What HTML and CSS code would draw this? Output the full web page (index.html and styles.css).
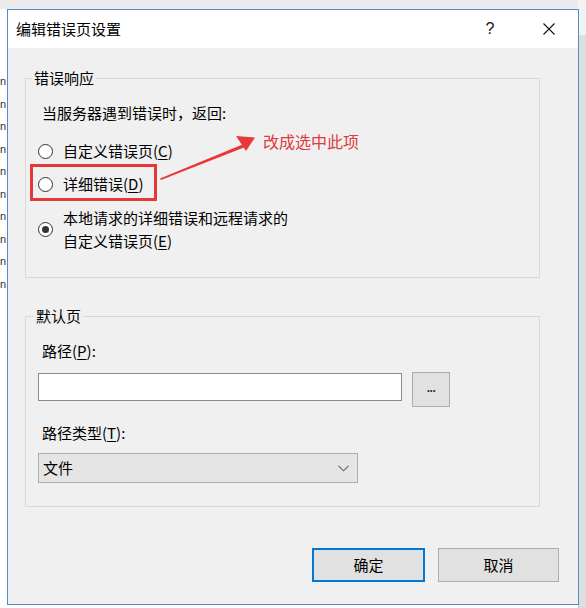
FILE: index.html
```html
<!DOCTYPE html>
<html lang="zh-CN">
<head>
<meta charset="utf-8">
<title>编辑错误页设置</title>
<link rel="stylesheet" href="styles.css">
</head>
<body>
<div class="desk-top"></div>
<div class="desk-right"><div class="desk-right-bar"></div></div>
<div class="desk-left">
  <span>n</span><span>n</span><span>n</span><span>n</span><span>n</span><span>n</span><span>n</span><span>n</span><span>n</span><span>n</span>
</div>

<div class="dialog">
  <div class="titlebar">
    <span class="title">编辑错误页设置</span>
    <span class="help">?</span>
    <span class="close">
      <svg width="12" height="12" viewBox="0 0 12 12"><path d="M0.5 0.5 L11.5 11.5 M11.5 0.5 L0.5 11.5" stroke="#111" stroke-width="1.1" fill="none"/></svg>
    </span>
  </div>
  <div class="content">
    <fieldset class="group group-1">
      <legend>错误响应</legend>
      <div class="label">当服务器遇到错误时，返回:</div>
      <div class="radio radio-1"><span class="circle"></span><span class="rtext">自定义错误页(<u>C</u>)</span></div>
      <div class="radio radio-2"><span class="circle"></span><span class="rtext">详细错误(<u>D</u>)</span></div>
      <div class="radio radio-3"><span class="circle checked"></span><span class="rtext multi">本地请求的详细错误和远程请求的<br>自定义错误页(<u>E</u>)</span></div>
    </fieldset>

    <fieldset class="group group-2">
      <legend>默认页</legend>
      <div class="label">路径(<u>P</u>):</div>
      <div class="path-row">
        <div class="input"></div>
        <div class="browse">...</div>
      </div>
      <div class="label label-type">路径类型(<u>T</u>):</div>
      <div class="select">
        <span>文件</span>
        <svg width="11" height="7" viewBox="0 0 11 7"><path d="M0.5 0.8 L5.5 5.8 L10.5 0.8" stroke="#666" stroke-width="1.1" fill="none"/></svg>
      </div>
    </fieldset>

    <div class="buttons">
      <div class="btn btn-default">确定</div>
      <div class="btn btn-cancel">取消</div>
    </div>
  </div>
</div>

<div class="mark-box"></div>
<svg class="mark-arrow" width="586" height="608" viewBox="0 0 586 608">
  <polygon points="160,178.5 242.5,144.5 244,147.5 161,180" fill="#e8393a"/>
  <polygon points="255,137.5 236,136 246,151" fill="#e8393a"/>
</svg>
<div class="mark-text">改成选中此项</div>
</body>
</html>
```

FILE: styles.css
```css
html, body {
  margin: 0;
  padding: 0;
}
body {
  width: 586px;
  height: 608px;
  background: #ffffff;
  position: relative;
  overflow: hidden;
  font-family: "Noto Sans CJK SC", "Microsoft YaHei", sans-serif;
  font-size: 15px;
  color: #000;
}
u { text-decoration: underline; text-underline-offset: 2px; }

.desk-top {
  position: absolute;
  left: 0; top: 0;
  width: 586px; height: 9px;
  background: #ebebeb;
}
.desk-right {
  position: absolute;
  left: 578px; top: 0;
  width: 8px; height: 608px;
  background: #f3f3f3;
}
.desk-right-bar {
  margin-top: 35px;
  height: 573px;
  background: #dedede;
  border-left: 1px solid #c8c8c8;
}
.desk-left {
  position: absolute;
  left: 0; top: 70px;
  width: 7px;
  display: flex;
  flex-direction: column;
  font-family: "Liberation Sans", sans-serif;
  font-size: 11px;
  line-height: 22.5px;
  color: #333;
}

.dialog {
  position: absolute;
  left: 7px; top: 9px;
  width: 572px; height: 596px;
  box-sizing: border-box;
  border: 1px solid #4d8fcc;
  background: #f0f0f0;
  display: flex;
  flex-direction: column;
}
.titlebar {
  height: 38px;
  background: #fff;
  display: flex;
  align-items: center;
  padding-left: 8px;
}
.title {
  flex: 1;
  font-size: 15px;
  line-height: 20px;
}
.help {
  font-family: "Liberation Sans", sans-serif;
  font-size: 16px;
  color: #111;
  width: 20px;
  text-align: center;
  margin-right: 43px;
}
.close {
  display: flex;
  margin-right: 23px;
}

.content {
  flex: 1;
  padding: 20px 0 0 17px;
  display: flex;
  flex-direction: column;
}
.group {
  margin: 0;
  width: 515px;
  box-sizing: border-box;
  border: 1px solid #d9d9d9;
  padding: 15px 12px 25px 6px;
  min-inline-size: 0;
}
.group legend {
  padding: 0 2px;
  line-height: 20px;
  font-size: 15px;
}
.group-2 legend {
  margin-left: 2px;
}
.label {
  line-height: 20px;
  margin-left: 10px;
}

.radio {
  display: flex;
  align-items: center;
  margin-left: 6px;
  gap: 10px;
}
.radio-1 { margin-top: 18px; }
.radio-2 { margin-top: 13px; }
.radio-3 { margin-top: 12px; }
.rtext { line-height: 20px; }
.rtext.multi { line-height: 23px; }
.circle {
  width: 15px; height: 15px;
  box-sizing: border-box;
  border: 1px solid #333;
  border-radius: 50%;
  background: #fff;
  display: flex;
  align-items: center;
  justify-content: center;
  flex: none;
}
.circle.checked::after {
  content: "";
  width: 7px; height: 7px;
  border-radius: 50%;
  background: #333;
}

.group-2 {
  margin-top: 28px;
  padding-bottom: 23px;
}
.path-row {
  display: flex;
  align-items: flex-start;
  margin-top: 11px;
  margin-left: 6px;
}
.input {
  width: 364px; height: 28px;
  box-sizing: border-box;
  margin-top: 1px;
  background: #fff;
  border: 1px solid #8c8c8c;
}
.browse {
  width: 38px; height: 35px;
  box-sizing: border-box;
  margin-left: 10px;
  background: #e1e1e1;
  border: 1px solid #adadad;
  display: flex;
  align-items: center;
  justify-content: center;
  font-family: "Liberation Sans", sans-serif;
  font-size: 12px;
  font-weight: bold;
  letter-spacing: -0.5px;
  color: #333;
  padding-bottom: 4px;
}
.label-type { margin-top: 16px; }
.select {
  margin-top: 10px;
  margin-left: 6px;
  width: 320px; height: 30px;
  box-sizing: border-box;
  background: #e5e5e5;
  border: 1px solid #adadad;
  display: flex;
  align-items: center;
  justify-content: space-between;
  padding: 0 8px 0 4px;
  line-height: 20px;
}

.buttons {
  margin-top: 41px;
  display: flex;
  justify-content: flex-end;
  padding-right: 19px;
  gap: 13px;
}
.btn {
  height: 34px;
  box-sizing: border-box;
  background: #e1e1e1;
  border: 1px solid #adadad;
  display: flex;
  align-items: center;
  justify-content: center;
  line-height: 20px;
}
.btn-default {
  width: 113px;
  border: 2px solid #0078d7;
}
.btn-cancel {
  width: 121px;
}

.mark-box {
  position: absolute;
  left: 30px; top: 164px;
  width: 127px; height: 37px;
  box-sizing: border-box;
  border: 3px solid #e5383b;
}
.mark-arrow {
  position: absolute;
  left: 0; top: 0;
  pointer-events: none;
}
.mark-text {
  position: absolute;
  left: 263px; top: 130px;
  font-size: 16px;
  line-height: 22px;
  color: #e03a3c;
}
```
